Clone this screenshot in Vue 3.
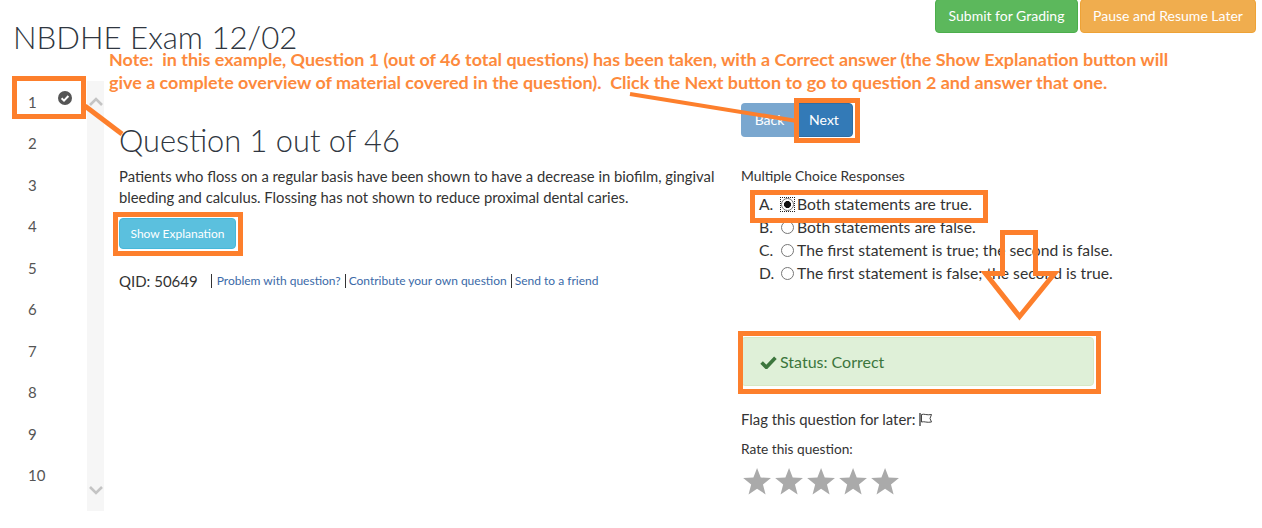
<template>
  <div class="page">
    <header class="top">
      <h1>NBDHE Exam 12/02</h1>
      <div class="top-actions">
        <button class="btn btn-green">Submit for Grading</button>
        <button class="btn btn-amber">Pause and Resume Later</button>
      </div>
    </header>

    <div class="body">
      <nav class="side">
        <ul class="side-list">
          <li v-for="n in 10" :key="n">
            <span>{{ n }}</span>
            <svg v-if="n === 1" class="done" viewBox="0 0 14 14">
              <circle cx="7" cy="7" r="7" fill="#555" />
              <path d="M3.6 7.2l2.4 2.4 4.4-4.6" fill="none" stroke="#fff" stroke-width="2" />
            </svg>
          </li>
        </ul>
        <div class="scroller">
          <svg viewBox="0 0 14 10"><path d="M1 8l6-6 6 6" fill="none" stroke="#c4c4c4" stroke-width="2.6" /></svg>
          <svg viewBox="0 0 14 10"><path d="M1 2l6 6 6-6" fill="none" stroke="#c4c4c4" stroke-width="2.6" /></svg>
        </div>
      </nav>

      <main class="question">
        <h2>Question 1 out of 46</h2>
        <p class="stem">
          Patients who floss on a regular basis have been shown to have a decrease in biofilm, gingival
          bleeding and calculus. Flossing has not shown to reduce proximal dental caries.
        </p>
        <button class="btn btn-info">Show Explanation</button>
        <div class="meta">
          <span class="qid">QID: 50649</span>
          <a>Problem with question?</a>
          <a>Contribute your own question</a>
          <a>Send to a friend</a>
        </div>
      </main>

      <section class="answers">
        <div class="pager">
          <button class="btn btn-back">Back</button>
          <button class="btn btn-next">Next</button>
        </div>
        <p class="choices-label">Multiple Choice Responses</p>
        <ul class="choices">
          <li v-for="c in choices" :key="c.letter">
            <span class="letter">{{ c.letter }}.</span>
            <span class="radio" :class="{ on: c.on }" />
            <span>{{ c.text }}</span>
          </li>
        </ul>
        <div class="status">
          <svg viewBox="0 0 16 13"><path d="M1.5 7l4.5 4.5L14.5 2.5" fill="none" stroke="#3c763d" stroke-width="3.4" /></svg>
          Status: Correct
        </div>
        <p class="flag">
          Flag this question for later:
          <svg viewBox="0 0 15 13"><path d="M1 0v13" stroke="#444" stroke-width="1.4" /><path d="M2.5 1.5c3-1 5 1 10 0l-1.5 4 1.5 3.5c-5 1-7-1-10 0z" fill="none" stroke="#444" /></svg>
        </p>
        <p class="rate">Rate this question:</p>
        <div class="stars">
          <svg v-for="n in 5" :key="n" viewBox="0 0 34 32">
            <path d="M16 1l3.9 10.2 10.9.6-8.5 6.9 2.8 10.5L16 23.3l-9.1 5.9 2.8-10.5-8.5-6.9 10.9-.6z" fill="#aaa" />
          </svg>
        </div>
      </section>
    </div>

    <!-- annotations drawn over the screenshot -->
    <div class="note">
      <div v-for="line in noteLines" :key="line">{{ line }}</div>
    </div>
    <svg class="marks" viewBox="0 0 1262 528" fill="none" stroke="#fd7f2c" stroke-width="5">
      <rect x="14.5" y="78.5" width="69" height="38" />
      <path d="M85 106l37 28" />
      <path d="M630 94l167 27" stroke-width="4" />
      <rect x="796.5" y="100.5" width="61" height="40" />
      <rect x="115.5" y="214.5" width="125" height="39" />
      <rect x="752.5" y="192.5" width="233" height="28" />
      <path d="M1002.5 232.5h33v41h19l-35 43-34-43h17z" />
      <rect x="740.5" y="333.5" width="358" height="58" />
    </svg>
  </div>
</template>

<script setup>
const choices = [
  { letter: 'A', text: 'Both statements are true.', on: true },
  { letter: 'B', text: 'Both statements are false.' },
  { letter: 'C', text: 'The first statement is true; the second is false.' },
  { letter: 'D', text: 'The first statement is false; the second is true.' }
]

const noteLines = [
  'Note:  in this example, Question 1 (out of 46 total questions) has been taken, with a Correct answer (the Show Explanation button will',
  'give a complete overview of material covered in the question).  Click the Next button to go to question 2 and answer that one.'
]
</script>

<style>
body {
  background: #fff;
}
</style>

<style scoped>
.page {
  position: relative;
  width: 1262px;
  height: 528px;
  overflow: hidden;
  font-family: Lato, sans-serif;
  font-size: 15px;
  color: #333;
}

.top {
  display: flex;
  justify-content: space-between;
  align-items: flex-start;
  height: 81px;
  padding: 0 6px 0 13px;
  box-sizing: border-box;
}

h1 {
  margin: 24px 0 0;
  font-size: 31.2px;
  font-weight: 300;
  line-height: 26px;
  color: #2f3640;
}

.top-actions {
  display: flex;
  gap: 2px;
}

.btn {
  border: 1px solid transparent;
  border-radius: 4px;
  color: #fff;
  font-family: inherit;
  font-size: 14px;
  line-height: 18px;
  padding: 0;
}

.btn-green {
  width: 143px;
  height: 34px;
  margin-top: -1px;
  background: #5cb85c;
  border-color: #4cae4c;
}

.btn-amber {
  width: 176px;
  height: 34px;
  margin-top: -1px;
  background: #f0ad4e;
  border-color: #eea236;
}

.body {
  display: grid;
  grid-template-columns: 104px 637px 1fr;
}

.side {
  display: flex;
  height: 430px;
  padding-left: 14px;
}

.side-list {
  width: 73px;
  margin: 0;
  padding: 0;
  list-style: none;
  color: #555;
  font-size: 15px;
}

.side-list li {
  display: flex;
  align-items: center;
  justify-content: space-between;
  height: 41.5px;
  padding: 0 15px 0 14px;
}

.done {
  width: 14px;
  height: 14px;
  margin-top: -7px;
}

.scroller {
  display: flex;
  flex-direction: column;
  justify-content: space-between;
  align-items: center;
  width: 17px;
  padding: 16px 0;
  box-sizing: border-box;
  background: #f6f6f6;
}

.scroller svg {
  width: 14px;
  height: 10px;
}

.question {
  padding-left: 15px;
}

h2 {
  margin: 41px 0 0;
  font-size: 30.8px;
  font-weight: 300;
  line-height: 38px;
  color: #2f3640;
}

.stem {
  width: 610px;
  margin: 6px 0 0;
  font-size: 14.8px;
  line-height: 21px;
}

.btn-info {
  display: block;
  width: 117px;
  height: 31px;
  margin-top: 10px;
  background: #5bc0de;
  border-color: #46b8da;
  font-size: 12px;
}

.meta {
  display: flex;
  align-items: center;
  margin-top: 25px;
  font-size: 12px;
  line-height: 14px;
}

.qid {
  margin-right: 13px;
  font-size: 15px;
}

.meta a {
  padding: 0 4px 0 3px;
  border-left: 1px solid #333;
  color: #3b6aa8;
}

.meta .qid + a {
  padding-left: 5px;
}

.answers {
  display: flex;
  flex-direction: column;
  align-items: flex-start;
}

.pager {
  display: flex;
  margin-top: 22px;
}

.btn-back {
  width: 57px;
  height: 34px;
  background: #7aa7cf;
  border-radius: 4px 0 0 4px;
}

.btn-next {
  width: 55px;
  height: 34px;
  padding-right: 3px;
  background: #337ab7;
  border-color: #2e6da4;
  border-radius: 0 4px 4px 0;
}

.choices-label {
  margin: 31px 0 0;
  font-size: 13.85px;
  line-height: 16px;
}

.choices {
  margin: 9px 0 0 18px;
  padding: 0;
  list-style: none;
  font-size: 15.7px;
  line-height: 23px;
}

.choices li {
  display: flex;
  align-items: center;
  white-space: nowrap;
}

.letter {
  width: 22px;
}

.radio {
  position: relative;
  width: 13px;
  height: 13px;
  margin-right: 3px;
  border: 1px solid #777;
  border-radius: 50%;
  box-sizing: border-box;
  background: #fff;
}

.radio.on {
  background: radial-gradient(circle, #111 0 3.2px, #fff 3.8px);
}

.radio.on::after {
  content: '';
  position: absolute;
  inset: -2px;
  border: 1px dotted #222;
}

.status {
  display: flex;
  align-items: center;
  gap: 3px;
  width: 353px;
  height: 49px;
  margin-top: 52px;
  padding-left: 18px;
  box-sizing: border-box;
  background: #dff0d8;
  border: 1px solid #d6e9c6;
  border-radius: 4px;
  color: #3c763d;
  font-size: 16px;
}

.status svg {
  width: 17px;
  height: 14px;
}

.flag {
  display: flex;
  align-items: center;
  gap: 4px;
  margin: 24px 0 0;
  font-size: 14.9px;
  line-height: 18px;
}

.flag svg {
  width: 15px;
  height: 13px;
}

.rate {
  margin: 13px 0 0;
  font-size: 13.7px;
  line-height: 16px;
}

.stars {
  display: flex;
  margin: 10px 0 0 1px;
}

.stars svg {
  width: 32px;
  height: 30px;
}

.note {
  display: flex;
  flex-direction: column;
  gap: 7px;
  position: absolute;
  left: 109px;
  top: 51px;
  color: #fd8a3d;
  font-family: Lato, sans-serif;
  font-size: 17.95px;
  font-weight: 700;
  line-height: 16px;
  white-space: pre;
}

.marks {
  position: absolute;
  left: 0;
  top: 0;
  width: 1262px;
  height: 528px;
  pointer-events: none;
}
</style>
